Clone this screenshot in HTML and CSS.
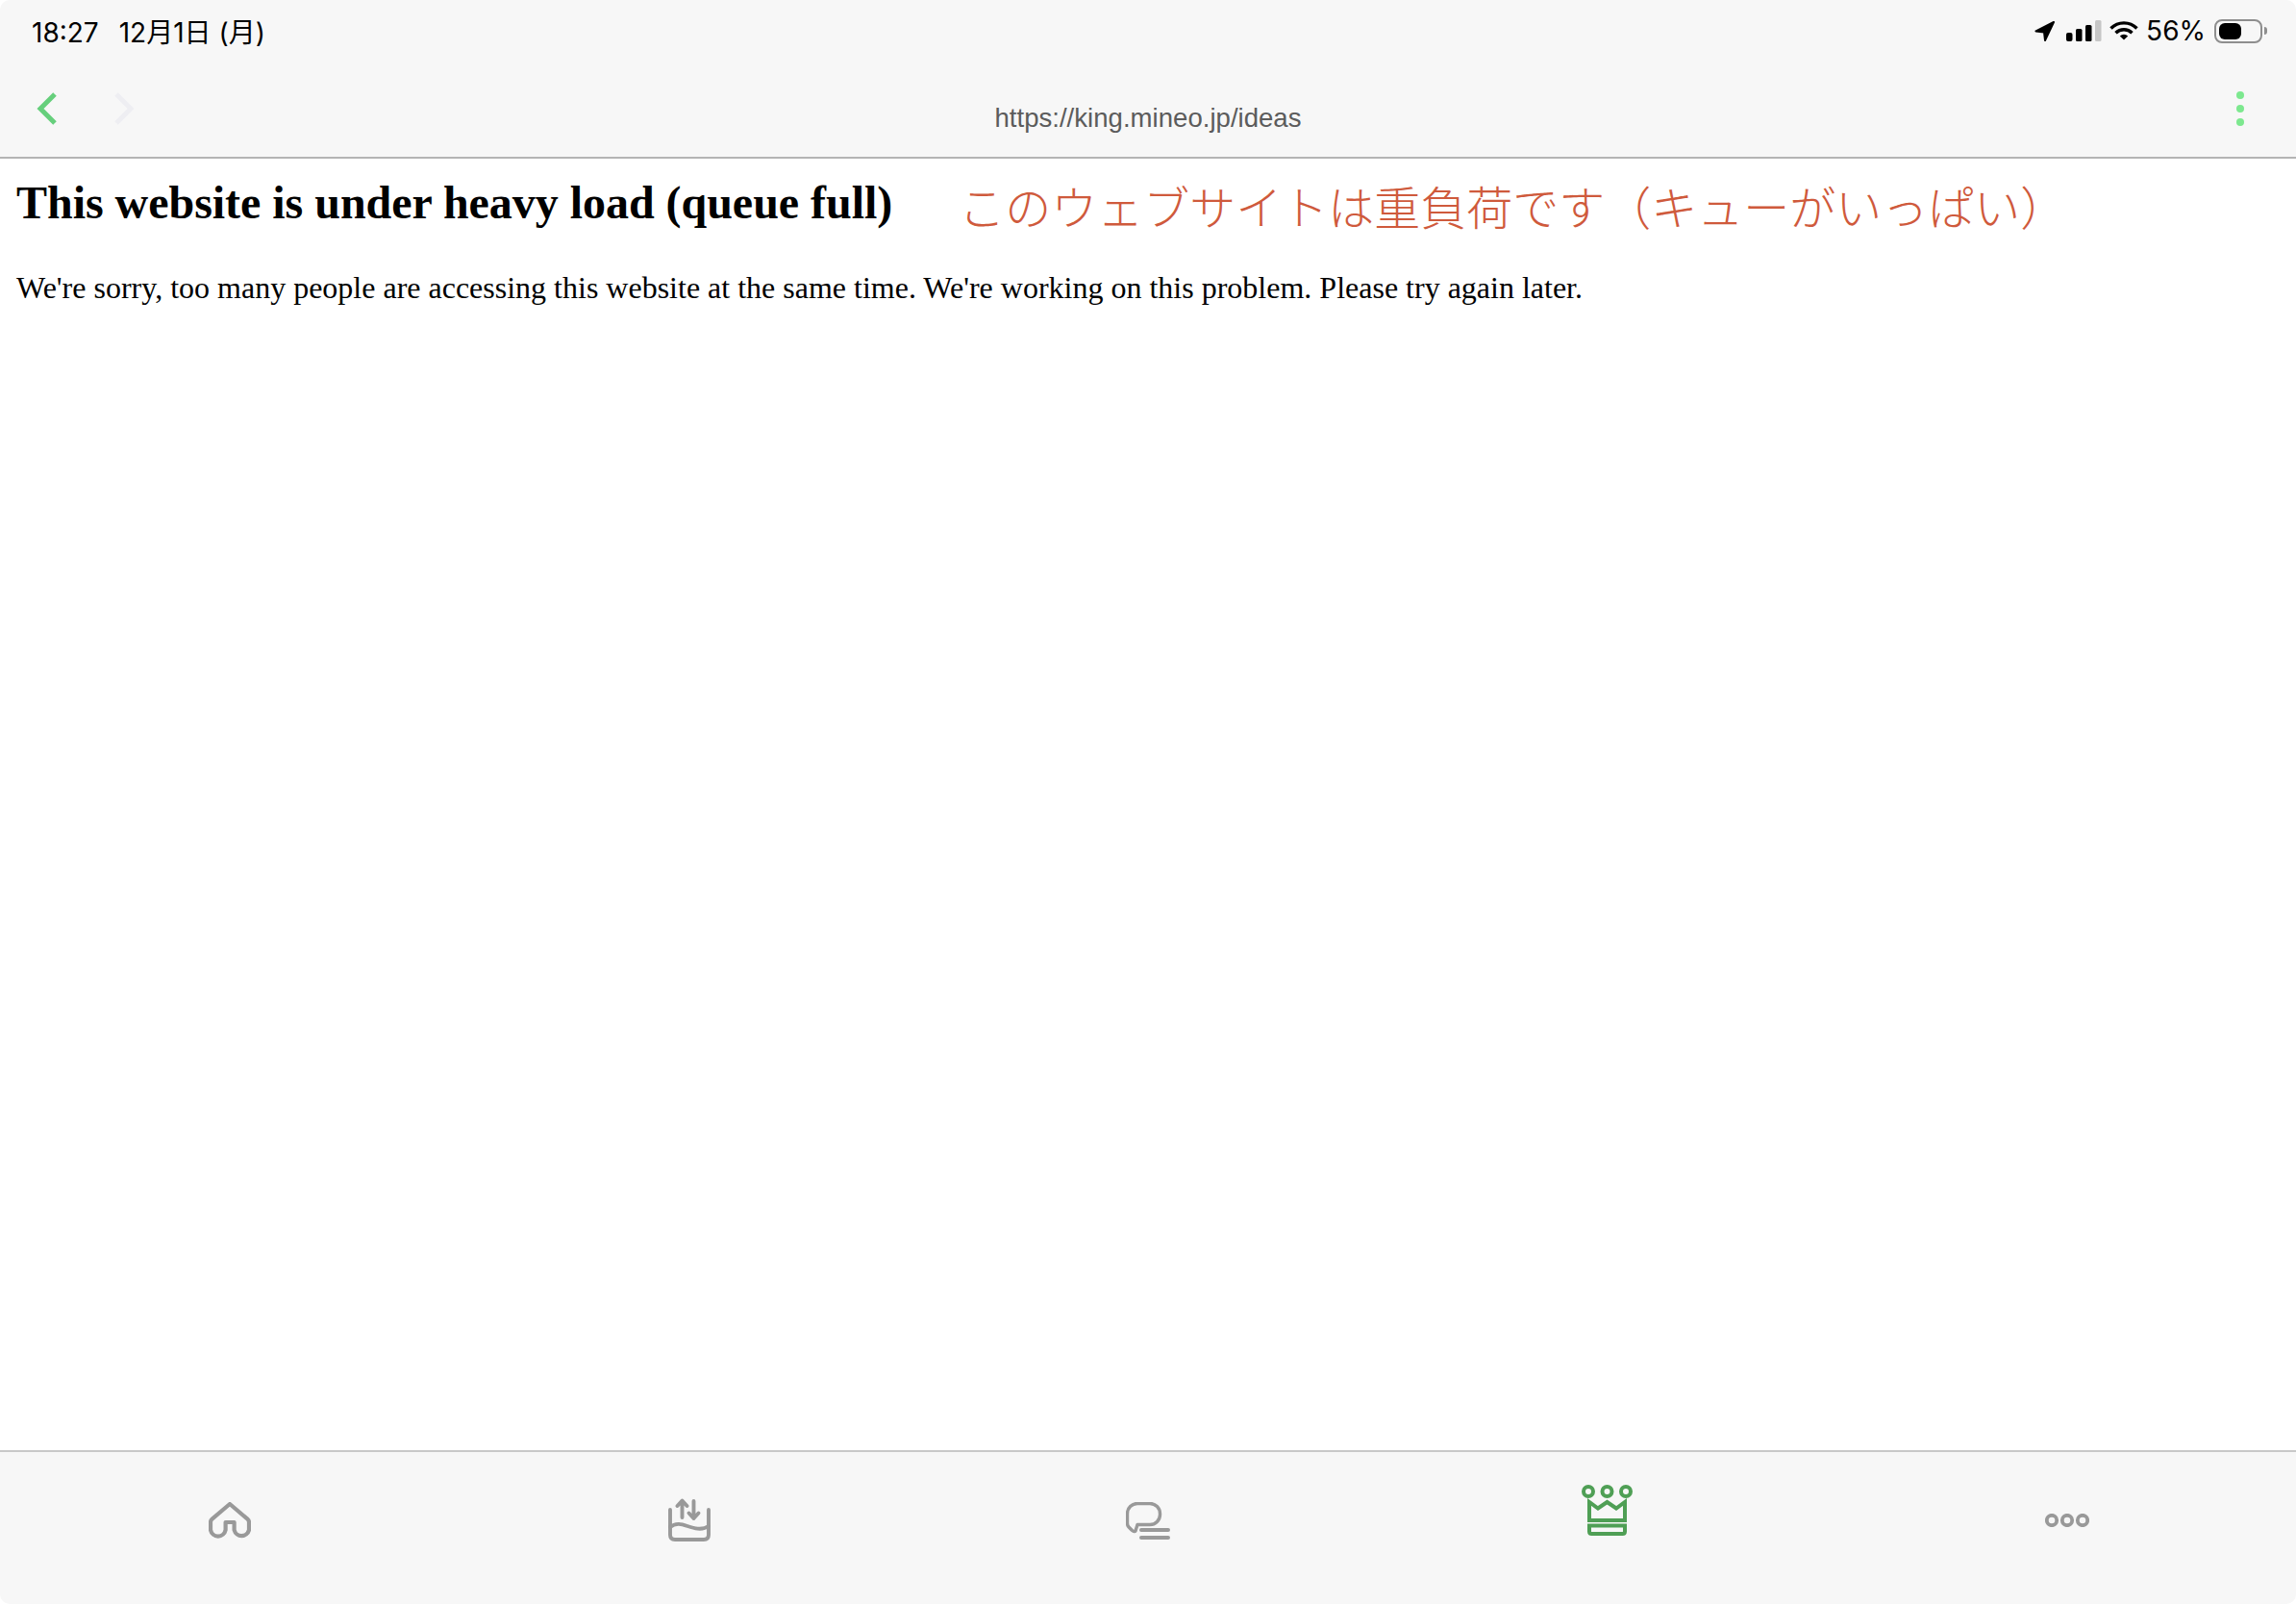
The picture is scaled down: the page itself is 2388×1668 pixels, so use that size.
FILE: index.html
```html
<!DOCTYPE html>
<html lang="ja">
<head>
<meta charset="utf-8">
<title>king.mineo.jp</title>
<link rel="stylesheet" href="styles.css">
</head>
<body>
<div class="app">
  <header class="topbar">
    <div class="status">
      <div class="status-left">
        <span class="time">18:27</span>
        <span class="date">12月1日 (月)</span>
      </div>
      <div class="status-right">
        <svg class="i-loc" width="21" height="21" viewBox="0 0 21 21"><path d="M20 1 1.500 10.500 10 11.500 11 20Z" fill="#000" stroke="#000" stroke-width="2" stroke-linejoin="round"/></svg>
        <svg class="i-signal" width="37" height="22" viewBox="0 0 37 22"><rect x="0" y="13" width="6.500" height="9" rx="2" fill="#000"/><rect x="10" y="9" width="6.500" height="13" rx="1.500" fill="#000"/><rect x="20" y="5" width="6.500" height="17" rx="1.500" fill="#000"/><rect x="30" y="0" width="6.500" height="22" rx="1.500" fill="#c6c6c6"/></svg>
        <svg class="i-wifi" width="30" height="20" viewBox="0 0 30 20"><path d="M1.500 7.500a19 19 0 0 1 27 0M6.500 12.300a12 12 0 0 1 17 0" fill="none" stroke="#000" stroke-width="3.400"/><path d="M10.800 15.500a6 6 0 0 1 8.400 0L15 19.600Z" fill="#000"/></svg>
        <span class="pct">56%</span>
        <div class="battery"><div class="battery-fill"></div></div>
        <div class="battery-nub"></div>
      </div>
    </div>
    <nav class="nav">
      <div class="nav-arrows">
        <svg width="22" height="36" viewBox="0 0 22 36"><path d="M19 3 4 18l15 15" fill="none" stroke="#66cf7c" stroke-width="5"/></svg>
        <svg width="22" height="36" viewBox="0 0 22 36"><path d="M3 3l15 15L3 33" fill="none" stroke="#eeeef2" stroke-width="5"/></svg>
      </div>
      <div class="url">https://king.mineo.jp/ideas</div>
      <div class="more"><i></i><i></i><i></i></div>
    </nav>
  </header>
  <main class="content">
    <div class="head-row">
      <h1>This website is under heavy load (queue full)</h1>
      <span class="note">このウェブサイトは重負荷です（キューがいっぱい）</span>
    </div>
    <p>We're sorry, too many people are accessing this website at the same time. We're working on this problem. Please try again later.</p>
  </main>
  <footer class="tabs">
    <div class="tab">
      <svg class="ic-home" width="44" height="40" viewBox="0 0 44 40" fill="none" stroke="#999" stroke-width="4.200" stroke-linejoin="round"><path d="M22 2 3.600 17.600Q2 19 2 21v8a8 8.500 0 0 0 15.600 0v-8h9v8a8 8.500 0 0 0 15.400 0v-8q0-2-1.600-3.400Z"/></svg>
    </div>
    <div class="tab">
      <svg class="ic-box" width="44" height="45" viewBox="0 0 44 45" fill="none" stroke="#999" stroke-width="3.900" stroke-linecap="round" stroke-linejoin="round"><path d="M2 12v26q0 5 5 5h30q5 0 5-5V12"/><path d="M2 30c6-5 12-3 18-1s15 5 22 0"/><path d="M14.500 20V3M9.500 8l5-5.500 5 5.500"/><path d="M26.500 3v18M21.500 15.500l5 5.500 5-5.500"/></svg>
    </div>
    <div class="tab">
      <svg class="ic-chat" width="46" height="40" viewBox="0 0 46 40" fill="none" stroke="#999" stroke-linecap="round" stroke-linejoin="round"><path stroke-width="3.400" d="M12 1.500h13a10.500 10.500 0 0 1 10.500 10.500v1a10.500 10.500 0 0 1-10.500 10.500H12l-2 6.500q-1 1.500-3.500-0.500L3 26q-1.500-1.500-1.500-4V12A10.500 10.500 0 0 1 12 1.500Z"/><path stroke-width="4" d="M16 29h28M16 37h28"/></svg>
    </div>
    <div class="tab tab-active">
      <svg class="ic-crown" width="53" height="53" viewBox="0 0 53 53" fill="none" stroke="#4f9f55" stroke-width="4"><circle cx="7" cy="7" r="5"/><circle cx="26.500" cy="7" r="5"/><circle cx="46" cy="7" r="5"/><path d="M8 18v19h37V18l-9 6.500L26.500 18 17 24.500Z"/><path d="M8 42.500h37v6q0 2.500-2.500 2.500h-32Q8 51 8 48.500Z"/></svg>
    </div>
    <div class="tab">
      <svg class="ic-more" width="46" height="14" viewBox="0 0 46 14" fill="none" stroke="#999" stroke-width="3.800"><circle cx="7" cy="7" r="5.200"/><circle cx="23" cy="7" r="5.200"/><circle cx="39" cy="7" r="5.200"/></svg>
    </div>
  </footer>
</div>
</body>
</html>
```
FILE: styles.css
```css
* { box-sizing: border-box; }
html, body { margin: 0; padding: 0; background: #fff; }
.app { width: 2388px; height: 1668px; display: flex; flex-direction: column; overflow: hidden; }

.topbar { height: 165px; flex: none; background: #f7f7f7; border-bottom: 2px solid #b4b4b4; border-radius: 10px 10px 0 0; }
.status { height: 64px; padding: 0 30px 0 33px; display: flex; justify-content: space-between; align-items: center; font-family: Inter, "Noto Sans CJK JP", sans-serif; font-size: 28px; color: #000; }
.status-left { display: flex; align-items: baseline; gap: 21px; }
.status-right { display: flex; align-items: center; }
.i-loc { margin-right: 12px; }
.i-signal { margin-right: 8px; }
.i-wifi { margin-right: 8px; }
.pct { margin-right: 9px; }
.battery { width: 50px; height: 25px; border: 2px solid #8e8e8e; border-radius: 8px; padding: 2px 3px; }
.battery-fill { width: 23px; height: 100%; background: #000; border-radius: 6px; }
.battery-nub { width: 3px; height: 8px; margin-left: 2px; background: #8e8e8e; border-radius: 0 3px 3px 0; }

.nav { height: 99px; padding: 0 38px; display: grid; grid-template-columns: 1fr auto 1fr; align-items: start; }
.nav-arrows { display: flex; gap: 58px; padding-top: 31px; }
.url { font-family: "Liberation Sans", Arial, sans-serif; font-size: 27.6px; color: #5c5c5c; padding-top: 43px; }
.more { justify-self: end; margin-right: 16px; display: flex; flex-direction: column; gap: 6px; padding-top: 31px; }
.more i { display: block; width: 8px; height: 8px; border-radius: 50%; background: #7de88f; }

.content { flex: 1; padding: 0 17px; background: #fff; font-family: "Liberation Serif", "Times New Roman", serif; color: #000; }
.head-row { display: flex; align-items: flex-start; gap: 69px; }
h1 { margin: 0; padding-top: 4px; font-size: 48px; line-height: 84px; font-weight: bold; white-space: nowrap; letter-spacing: -0.03px; }
.note { font-family: "Noto Sans CJK JP", sans-serif; font-weight: 300; font-size: 48px; line-height: 84px; color: #cf5a3c; white-space: nowrap; padding-top: 6px; }
p { margin: 0; font-size: 32px; line-height: 38px; padding-top: 25px; }

.tabs { height: 160px; flex: none; background: #f7f7f7; border-top: 2px solid #c8c8c8; display: grid; grid-template-columns: repeat(5, 1fr); border-radius: 0 0 10px 10px; }
.tab { display: flex; justify-content: center; align-items: flex-start; padding-top: 52px; }
.tab-active { padding-top: 34px; }
.ic-box { margin-top: -4px; margin-left: 2px; }
.ic-more { margin-top: 12px; margin-left: 2px; }
```
